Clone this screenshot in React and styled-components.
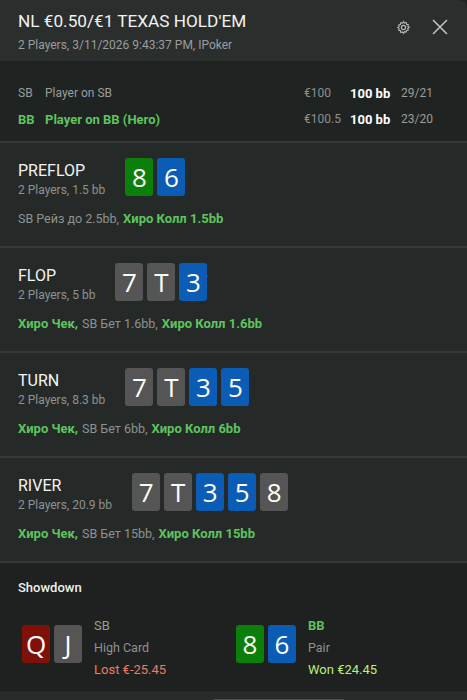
import React from "react";
import styled, { createGlobalStyle } from "styled-components";

const GlobalStyle = createGlobalStyle`
  html, body {
    margin: 0;
    padding: 0;
    background: #1f2322;
  }
  body {
    font-family: Roboto, "Noto Sans", sans-serif;
    color: #e8e8e8;
  }
`;

const CARD_COLORS = {
  g: "#0a800a",
  b: "#0a5cb4",
  n: "#555555",
  r: "#7f1208",
};

const streets = [
  {
    name: "PREFLOP",
    info: "2 Players, 1.5 bb",
    cards: [
      ["8", "g"],
      ["6", "b"],
    ],
    actions: [
      { text: "SB Рейз до 2.5bb,", hero: false },
      { text: "Хиро Колл 1.5bb", hero: true },
    ],
  },
  {
    name: "FLOP",
    info: "2 Players, 5 bb",
    cards: [
      ["7", "n"],
      ["T", "n"],
      ["3", "b"],
    ],
    actions: [
      { text: "Хиро Чек,", hero: true },
      { text: "SB Бет 1.6bb,", hero: false },
      { text: "Хиро Колл 1.6bb", hero: true },
    ],
  },
  {
    name: "TURN",
    info: "2 Players, 8.3 bb",
    cards: [
      ["7", "n"],
      ["T", "n"],
      ["3", "b"],
      ["5", "b"],
    ],
    actions: [
      { text: "Хиро Чек,", hero: true },
      { text: "SB Бет 6bb,", hero: false },
      { text: "Хиро Колл 6bb", hero: true },
    ],
  },
  {
    name: "RIVER",
    info: "2 Players, 20.9 bb",
    cards: [
      ["7", "n"],
      ["T", "n"],
      ["3", "b"],
      ["5", "b"],
      ["8", "n"],
    ],
    actions: [
      { text: "Хиро Чек,", hero: true },
      { text: "SB Бет 15bb,", hero: false },
      { text: "Хиро Колл 15bb", hero: true },
    ],
  },
];

const GearIcon = () => (
  <svg width="15" height="15" viewBox="0 0 24 24" fill="none" stroke="#b5b8b7" strokeWidth="1.8">
    <path d="M12 2.5l1.6 2.3 2.7-.7.6 2.7 2.7.6-.7 2.7 2.3 1.6-2.3 1.6.7 2.7-2.7.6-.6 2.7-2.7-.7L12 21.5l-1.6-2.3-2.7.7-.6-2.7-2.7-.6.7-2.7L2.8 12l2.3-1.6-.7-2.7 2.7-.6.6-2.7 2.7.7z" />
    <circle cx="12" cy="12" r="3.4" />
  </svg>
);

const CloseIcon = () => (
  <svg width="16" height="16" viewBox="0 0 16 16" stroke="#c2c5c4" strokeWidth="1.5">
    <path d="M1 1l14 14M15 1L1 15" />
  </svg>
);

const App = () => {
  return (
    <>
      <GlobalStyle />
      <Panel>
        <Header>
          <div>
            <Title>NL €0.50/€1 TEXAS HOLD'EM</Title>
            <SubTitle>2 Players, 3/11/2026 9:43:37 PM, IPoker</SubTitle>
          </div>
          <HeaderIcons>
            <GearIcon />
            <CloseIcon />
          </HeaderIcons>
        </Header>

        <Players>
          <PlayerRow>
            <Pos>SB</Pos>
            <PName>Player on SB</PName>
            <Stack>€100</Stack>
            <BB>100 bb</BB>
            <Stats>29/21</Stats>
          </PlayerRow>
          <PlayerRow $hero>
            <Pos>BB</Pos>
            <PName>Player on BB (Hero)</PName>
            <Stack>€100.5</Stack>
            <BB>100 bb</BB>
            <Stats>23/20</Stats>
          </PlayerRow>
        </Players>

        {streets.map((s) => (
          <Street key={s.name}>
            <StreetTop>
              <div>
                <StreetName>{s.name}</StreetName>
                <StreetInfo>{s.info}</StreetInfo>
              </div>
              <Cards>
                {s.cards.map(([v, c], i) => (
                  <Card key={i} $color={CARD_COLORS[c]}>
                    {v}
                  </Card>
                ))}
              </Cards>
            </StreetTop>
            <Actions>
              {s.actions.map((a, i) => (
                <Action key={i} $hero={a.hero}>
                  {a.text}
                </Action>
              ))}
            </Actions>
          </Street>
        ))}

        <Showdown>
          <ShowdownTitle>Showdown</ShowdownTitle>
          <Hands>
            <Hand>
              <Cards>
                <Card $color={CARD_COLORS.r}>Q</Card>
                <Card $color={CARD_COLORS.n}>J</Card>
              </Cards>
              <HandText>
                <HandPos>SB</HandPos>
                <HandRank>High Card</HandRank>
                <Result $won={false}>Lost €-25.45</Result>
              </HandText>
            </Hand>
            <Hand>
              <Cards>
                <Card $color={CARD_COLORS.g}>8</Card>
                <Card $color={CARD_COLORS.b}>6</Card>
              </Cards>
              <HandText>
                <HandPos $hero>BB</HandPos>
                <HandRank>Pair</HandRank>
                <Result $won>Won €24.45</Result>
              </HandText>
            </Hand>
          </Hands>
        </Showdown>
        <BottomBar>
          <Thumb />
        </BottomBar>
      </Panel>
    </>
  );
};

export default App;

const Panel = styled.div`
  width: 467px;
  min-height: 700px;
  background: #1f2322;
  border-top-right-radius: 8px;
  overflow: hidden;
`;

const Header = styled.div`
  height: 61px;
  box-sizing: border-box;
  padding: 10px 18px 0 18px;
  background: #2a2e2d;
  display: flex;
  justify-content: space-between;
  align-items: flex-start;
`;

const Title = styled.div`
  font-size: 17.2px;
  color: #f2f2f2;
  line-height: 22px;
`;

const SubTitle = styled.div`
  font-size: 12px;
  line-height: 16px;
  color: #9a9d9c;
  margin-top: 5px;
`;

const HeaderIcons = styled.div`
  display: flex;
  align-items: center;
  gap: 21px;
  padding-top: 9px;
  padding-right: 1px;
`;

const Players = styled.div`
  background: #1f2322;
  padding: 19px 18px 10px 18px;
  height: 82px;
  box-sizing: border-box;
  border-bottom: 2px solid #353938;
`;

const PlayerRow = styled.div`
  display: grid;
  grid-template-columns: 27px 1fr 46px 51px 48px;
  align-items: center;
  height: 26px;
  font-size: ${(p) => (p.$hero ? "13px" : "12px")};
  color: ${(p) => (p.$hero ? "#5ec45e" : "#9a9d9c")};
  font-weight: ${(p) => (p.$hero ? 700 : 400)};
`;

const Pos = styled.span``;

const PName = styled.span``;

const Stack = styled.span`
  color: #8e9190;
  font-weight: 400;
  font-size: 12px;
`;

const BB = styled.span`
  color: #ffffff;
  font-weight: 700;
  font-size: 13px;
`;

const Stats = styled.span`
  color: #9a9d9c;
  font-weight: 400;
  font-size: 12px;
`;

const Street = styled.div`
  background: #252a28;
  height: 105px;
  box-sizing: border-box;
  padding: 15px 18px 0 18px;
  border-bottom: 2px solid #353938;
`;

const StreetTop = styled.div`
  display: flex;
  align-items: flex-start;
  gap: 20px;
`;

const StreetName = styled.div`
  font-size: 16px;
  color: #f4f4f4;
  line-height: 22px;
  margin-top: 2px;
`;

const StreetInfo = styled.div`
  font-size: 12px;
  color: #8f9291;
  line-height: 17px;
`;

const Cards = styled.div`
  display: flex;
  gap: 4px;
`;

const Card = styled.div`
  width: 28px;
  height: 38px;
  border-radius: 3px;
  background: ${(p) => p.$color};
  color: #ffffff;
  font-size: 26px;
  display: flex;
  align-items: center;
  justify-content: center;
  font-family: "Open Sans", "Noto Sans", sans-serif;
`;

const Actions = styled.div`
  margin-top: 12px;
  font-size: 13px;
  display: flex;
  gap: 4px;
`;

const Action = styled.span`
  color: ${(p) => (p.$hero ? "#5ec45e" : "#8f9291")};
  font-weight: ${(p) => (p.$hero ? 700 : 400)};
  font-size: ${(p) => (p.$hero ? "13px" : "12.5px")};
`;

const Showdown = styled.div`
  background: #1e211f;
  height: 128px;
  box-sizing: border-box;
  padding: 17px 18px 0 18px;
`;

const ShowdownTitle = styled.div`
  font-size: 13px;
  color: #f0f0f0;
  font-weight: 500;
`;

const Hands = styled.div`
  display: grid;
  grid-template-columns: 214px 1fr;
  margin-top: 12px;
  padding-left: 4px;
`;

const Hand = styled.div`
  display: flex;
  align-items: center;
  gap: 12px;
`;

const HandText = styled.div`
  display: flex;
  flex-direction: column;
  font-size: 13px;
  line-height: 22px;
  padding-top: 8px;
`;

const HandPos = styled.div`
  color: ${(p) => (p.$hero ? "#5ec45e" : "#9a9d9c")};
  font-weight: ${(p) => (p.$hero ? 700 : 400)};
`;

const HandRank = styled.div`
  color: #8f9291;
  font-size: 12.5px;
`;

const Result = styled.div`
  color: ${(p) => (p.$won ? "#b8f07a" : "#f07a62")};
`;

const BottomBar = styled.div`
  height: 10px;
  background: #272b2a;
  position: relative;
`;

const Thumb = styled.div`
  position: absolute;
  left: 213px;
  bottom: 0;
  width: 131px;
  height: 2px;
  background: #4a4e4d;
`;
